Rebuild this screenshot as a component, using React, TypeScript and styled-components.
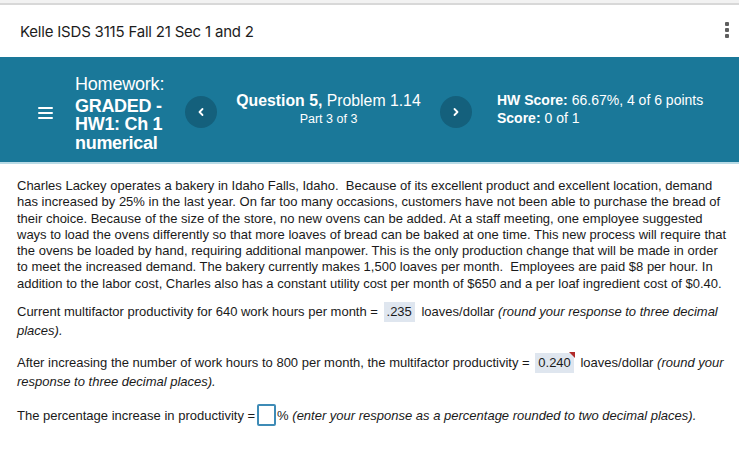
import React from "react";
import styled, { createGlobalStyle } from "styled-components";

const Global = createGlobalStyle`
  html, body { margin: 0; padding: 0; background: #fff; }
  body { width: 739px; height: 474px; overflow: hidden; }
`;

const Page = styled.div`
  width: 739px;
  height: 474px;
  background: #fff;
  border-top: 3px solid #f2f2f2;
  box-sizing: border-box;
`;

const TopBar = styled.header`
  height: 54px;
  border-top: 2px solid #d8d8d8;
  display: flex;
  align-items: center;
  justify-content: space-between;
  padding: 0 10px 0 20px;
  box-sizing: border-box;
`;

const CourseTitle = styled.h1`
  margin: 0;
  font-family: Inter, "Liberation Sans", sans-serif;
  font-weight: 400;
  font-size: 15px;
  letter-spacing: -0.2px;
  color: #1d1d1d;
`;

const Kebab = styled.div`
  display: flex;
  flex-direction: column;
  gap: 2px;
  padding-bottom: 2px;
`;

const Dot = styled.span`
  width: 4px;
  height: 4px;
  border-radius: 1px;
  background: #5f5f5f;
`;

const Banner = styled.section`
  height: 107px;
  background: #1a7899;
  border-bottom: 2px solid #b9dbe6;
  display: flex;
  align-items: center;
  padding-left: 38px;
  box-sizing: border-box;
  color: #fff;
  font-family: "Liberation Sans", Arial, sans-serif;
`;

const Menu = styled.div`
  width: 15px;
  display: flex;
  flex-direction: column;
  gap: 3px;
  margin-top: 6px;
  margin-right: 22px;
`;

const MenuLine = styled.span`
  height: 2px;
  background: #fff;
  border-radius: 1px;
`;

const HwTitle = styled.div`
  width: 100px;
  margin-right: 10px;
  padding-top: 7px;
`;

const HwLabel = styled.div`
  font-size: 18px;
  line-height: 20px;
  margin-bottom: 3px;
  letter-spacing: -0.2px;
`;

const HwName = styled.div`
  font-size: 18px;
  font-weight: 700;
  line-height: 18.5px;
  letter-spacing: -0.3px;
`;

const Nav = styled.button`
  width: 32px;
  height: 32px;
  border-radius: 50%;
  border: none;
  background: #14607c;
  display: flex;
  align-items: center;
  justify-content: center;
  padding: 0;
  flex-shrink: 0;
  margin-top: 4px;
`;

const Question = styled.div`
  width: 223px;
  text-align: center;
  margin-top: -2px;
`;

const QTitle = styled.div`
  font-size: 15.8px;
  line-height: 18px;
`;

const QPart = styled.div`
  font-size: 12.5px;
  line-height: 14px;
  margin-top: 2px;
`;

const Scores = styled.div`
  margin-left: 25px;
  font-size: 14px;
  line-height: 18px;
  margin-top: -2px;
`;

const Content = styled.main`
  padding: 14px 0 0 17px;
  font-family: "Liberation Sans", Arial, sans-serif;
  font-size: 13px;
  color: #1a1a1a;
  white-space: nowrap;
`;

const Story = styled.p`
  margin: 0 0 10px;
  line-height: 16.3px;
`;

const Item = styled.p`
  margin: 0 0 13px;
  line-height: 18px;
`;

const Answer = styled.span<{ $flag?: boolean }>`
  position: relative;
  display: inline-block;
  background: #dfe6ef;
  padding: 2px 3px;
  line-height: 16px;
  margin: 0 3px 0 2px;
  ${(p) =>
    p.$flag
      ? `&::after {
    content: "";
    position: absolute;
    right: -1px;
    top: -1px;
    border-top: 6px solid #b12a2a;
    border-left: 6px solid transparent;
  }`
      : ""}
`;

const Blank = styled.span`
  display: inline-block;
  width: 15px;
  height: 18px;
  border: 2px solid #3e8bb6;
  border-radius: 2px;
  vertical-align: -6px;
  margin: 0 1px 0 2px;
`;

const Hint = styled.i``;

const Chevron = ({ dir }: { dir: "l" | "r" }) => (
  <svg width="8" height="10" viewBox="0 0 8 10">
    <path
      d={dir === "l" ? "M5.5 2 L2.5 5 L5.5 8" : "M2.5 2 L5.5 5 L2.5 8"}
      fill="none"
      stroke="#fff"
      strokeWidth="1.8"
      strokeLinecap="round"
      strokeLinejoin="round"
    />
  </svg>
);

export default function App() {
  return (
    <>
      <Global />
      <Page>
        <TopBar>
          <CourseTitle>Kelle ISDS 3115 Fall 21 Sec 1 and 2</CourseTitle>
          <Kebab>
            <Dot />
            <Dot />
            <Dot />
          </Kebab>
        </TopBar>
        <Banner>
          <Menu>
            <MenuLine />
            <MenuLine />
            <MenuLine />
          </Menu>
          <HwTitle>
            <HwLabel>Homework:</HwLabel>
            <HwName>
              GRADED -<br />
              HW1: Ch 1<br />
              numerical
            </HwName>
          </HwTitle>
          <Nav aria-label="Previous question">
            <Chevron dir="l" />
          </Nav>
          <Question>
            <QTitle>
              <b>Question 5,</b> Problem 1.14
            </QTitle>
            <QPart>Part 3 of 3</QPart>
          </Question>
          <Nav aria-label="Next question">
            <Chevron dir="r" />
          </Nav>
          <Scores>
            <div>
              <b>HW Score:</b> 66.67%, 4 of 6 points
            </div>
            <div>
              <b>Score:</b> 0 of 1
            </div>
          </Scores>
        </Banner>
        <Content>
          <Story>
            Charles Lackey operates a bakery in Idaho Falls, Idaho.&nbsp; Because of its excellent product and excellent location, demand
            <br />
            has increased by 25% in the last year. On far too many occasions, customers have not been able to purchase the bread of
            <br />
            their choice. Because of the size of the store, no new ovens can be added. At a staff meeting, one employee suggested
            <br />
            ways to load the ovens differently so that more loaves of bread can be baked at one time. This new process will require that
            <br />
            the ovens be loaded by hand, requiring additional manpower. This is the only production change that will be made in order
            <br />
            to meet the increased demand. The bakery currently makes 1,500 loaves per month.&nbsp; Employees are paid $8 per hour. In
            <br />
            addition to the labor cost, Charles also has a constant utility cost per month of $650 and a per loaf ingredient cost of $0.40.
          </Story>
          <Item>
            Current multifactor productivity for 640 work hours per month ={" "}
            <Answer>.235</Answer> loaves/dollar{" "}
            <Hint>(round your response to three decimal</Hint>
            <br />
            <Hint>places).</Hint>
          </Item>
          <Item>
            After increasing the number of work hours to 800 per month, the multifactor productivity ={" "}
            <Answer $flag>0.240</Answer> loaves/dollar <Hint>(round your</Hint>
            <br />
            <Hint>response to three decimal places).</Hint>
          </Item>
          <Item>
            The percentage increase in productivity =<Blank />%{" "}
            <Hint>(enter your response as a percentage rounded to two decimal places).</Hint>
          </Item>
        </Content>
      </Page>
    </>
  );
}
